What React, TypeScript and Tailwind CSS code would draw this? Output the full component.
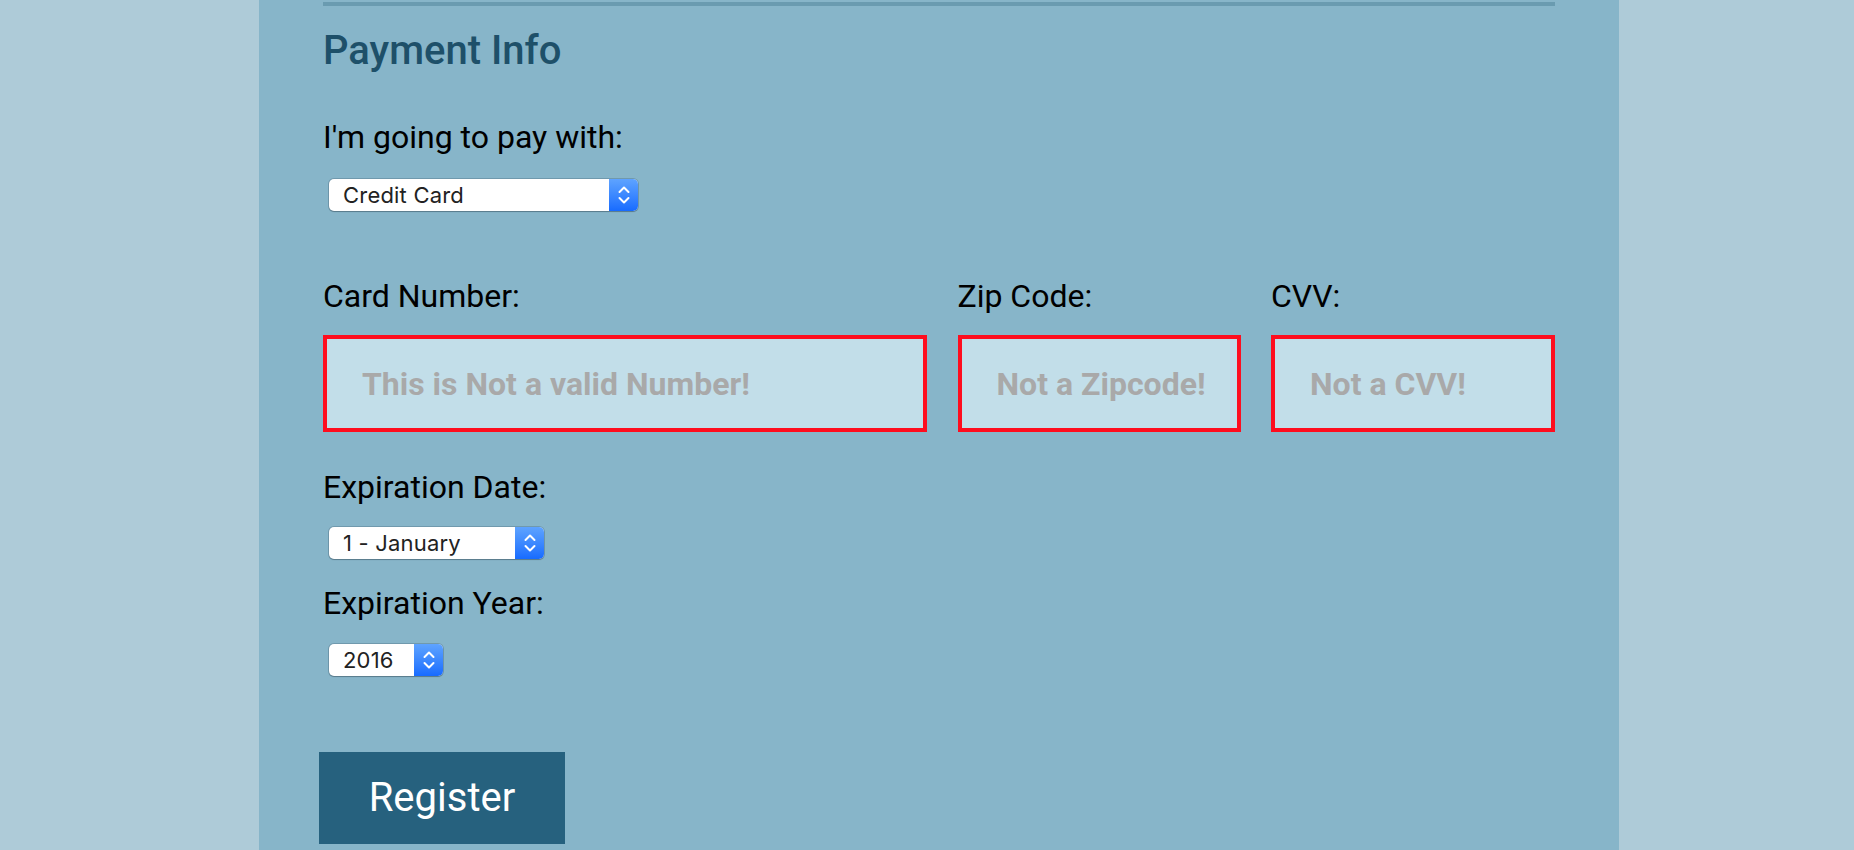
import { ChangeEvent, useState } from 'react'

type SelectProps = {
  value: string
  width: string
}

function MacSelect({ value, width }: SelectProps) {
  return (
    <div
      className={`ml-[6px] flex h-[32px] ${width} items-stretch rounded-[5px] bg-white shadow-[0_0_0_1px_rgba(70,100,120,0.35),0_1px_1px_rgba(0,0,0,0.25)]`}
    >
      <div className="flex flex-1 items-center pl-[14px] pt-[1px] font-['Inter',sans-serif] text-[22px] tracking-[0.2px] text-[#222]">
        {value}
      </div>
      <div className="flex w-[29px] items-center justify-center rounded-r-[5px] bg-gradient-to-b from-[#5ea3ff] to-[#176bff]">
        <svg width="14" height="24" viewBox="0 0 14 24" fill="none">
          <path d="M2.5 9 L7 4.5 L11.5 9" stroke="white" strokeWidth="2" strokeLinecap="round" strokeLinejoin="round" />
          <path d="M2.5 15 L7 19.5 L11.5 15" stroke="white" strokeWidth="2" strokeLinecap="round" strokeLinejoin="round" />
        </svg>
      </div>
    </div>
  )
}

function Label({ children }: { children: string }) {
  return <label className="block text-[32px] leading-[32px] text-black">{children}</label>
}

export default function App() {
  const [card, setCard] = useState('')
  const [zip, setZip] = useState('')
  const [cvv, setCvv] = useState('')

  const inputClass =
    "h-[97px] w-full border-4 border-[#fe0d1e] bg-[#c2dee9] pl-[35px] pr-[8px] text-[32px] font-bold text-[#333] outline-none placeholder:text-[#a9a9a9] placeholder:font-bold"

  return (
    <div className="min-h-screen bg-[#aecbd8] font-['Roboto',sans-serif]">
      <div className="ml-[259px] min-h-screen w-[1360px] bg-[#87b5c9] px-[64px] pt-[2px]">
        <div className="border-t-4 border-[#6a9bb0]" />

        {/* Payment section */}
        <h2 className="mt-[25px] text-[40px] font-medium leading-[40px] text-[#1e5069]">Payment Info</h2>

        <div className="mt-[50px]">
          <Label>I'm going to pay with:</Label>
        </div>
        <div className="mt-[26px]">
          <MacSelect value="Credit Card" width="w-[309px]" />
        </div>

        <div className="mt-[69px] flex justify-between">
          <div className="w-[604px]">
            <Label>Card Number:</Label>
            <input
              className={`mt-[23px] ${inputClass}`}
              placeholder="This is Not a valid Number!"
              value={card}
              onChange={(e: ChangeEvent<HTMLInputElement>) => setCard(e.target.value)}
            />
          </div>
          <div className="w-[283px]">
            <Label>Zip Code:</Label>
            <input
              className={`mt-[23px] ${inputClass}`}
              placeholder="Not a Zipcode!"
              value={zip}
              onChange={(e: ChangeEvent<HTMLInputElement>) => setZip(e.target.value)}
            />
          </div>
          <div className="w-[284px]">
            <Label>CVV:</Label>
            <input
              className={`mt-[23px] ${inputClass}`}
              placeholder="Not a CVV!"
              value={cvv}
              onChange={(e: ChangeEvent<HTMLInputElement>) => setCvv(e.target.value)}
            />
          </div>
        </div>

        <div className="mt-[39px]">
          <Label>Expiration Date:</Label>
        </div>
        <div className="mt-[24px]">
          <MacSelect value="1 - January" width="w-[215px]" />
        </div>

        <div className="mt-[28px]">
          <Label>Expiration Year:</Label>
        </div>
        <div className="mt-[25px]">
          <MacSelect value="2016" width="w-[114px]" />
        </div>

        <button className="-ml-[4px] mt-[76px] flex h-[92px] w-[246px] items-center justify-center bg-[#26617e] text-[40px] text-white">
          Register
        </button>
      </div>
    </div>
  )
}
